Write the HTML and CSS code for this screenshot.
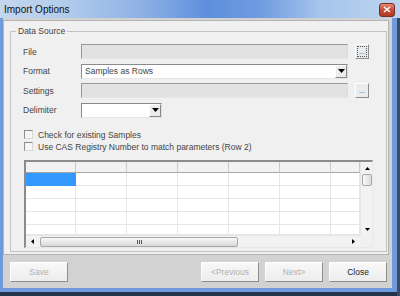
FILE: index.html
```html
<!DOCTYPE html>
<html lang="en">
<head>
    <meta charset="UTF-8">
    <title>Import Options</title>
    <link rel="stylesheet" href="styles.css">
</head>
<body>
    <div class="window">
        <div class="titlebar">
            <span class="title">Import Options</span>
            <span class="close-x">
                <svg width="8" height="7" viewBox="0 0 8 7"><path d="M1 1L7 6M7 1L1 6" stroke="#fff" stroke-width="1.6"/></svg>
            </span>
        </div>

        <div class="client">
            <div class="panel">
                <fieldset class="group">
                    <legend>Data Source</legend>

                    <div class="fields">
                        <label>File</label>
                        <div class="input"></div>
                        <button class="browse focused"><span>...</span></button>

                        <label>Format</label>
                        <div class="select">Samples as Rows<span class="drop"><svg width="7" height="4"><path d="M0 0h7L3.5 4z"/></svg></span></div>
                        <span></span>

                        <label>Settings</label>
                        <div class="input"></div>
                        <button class="browse"><span>...</span></button>

                        <label>Delimiter</label>
                        <div class="select short"><span class="drop"><svg width="7" height="4"><path d="M0 0h7L3.5 4z"/></svg></span></div>
                        <span></span>
                    </div>

                    <div class="checks">
                        <div class="check"><span class="box"></span>Check for existing Samples</div>
                        <div class="check"><span class="box"></span>Use CAS Registry Number to match parameters (Row 2)</div>
                    </div>

                    <div class="grid">
                        <div class="cells">
                            <div class="hd"></div><div class="hd"></div><div class="hd"></div><div class="hd"></div><div class="hd"></div><div class="hd"></div><div class="hd"></div>
                            <div class="cell selected"></div><div class="cell"></div><div class="cell"></div><div class="cell"></div><div class="cell"></div><div class="cell"></div><div class="cell"></div>
                            <div class="cell"></div><div class="cell"></div><div class="cell"></div><div class="cell"></div><div class="cell"></div><div class="cell"></div><div class="cell"></div>
                            <div class="cell"></div><div class="cell"></div><div class="cell"></div><div class="cell"></div><div class="cell"></div><div class="cell"></div><div class="cell"></div>
                            <div class="cell"></div><div class="cell"></div><div class="cell"></div><div class="cell"></div><div class="cell"></div><div class="cell"></div><div class="cell"></div>
                            <div class="cell"></div><div class="cell"></div><div class="cell"></div><div class="cell"></div><div class="cell"></div><div class="cell"></div><div class="cell"></div>
                        </div>
                        <div class="vscroll">
                            <span class="sb-btn"><svg width="5" height="3"><path d="M0 3h5L2.5 0z"/></svg></span>
                            <span class="vthumb"></span>
                            <span class="sb-fill"></span>
                            <span class="sb-btn"><svg width="5" height="3"><path d="M0 0h5L2.5 3z"/></svg></span>
                        </div>
                        <div class="hscroll">
                            <span class="sb-btn"><svg width="3" height="5"><path d="M3 0v5L0 2.5z"/></svg></span>
                            <span class="hthumb"><i></i><i></i><i></i></span>
                            <span class="sb-fill"></span>
                            <span class="sb-btn"><svg width="3" height="5"><path d="M0 0v5L3 2.5z"/></svg></span>
                        </div>
                        <div class="corner"></div>
                    </div>
                </fieldset>
            </div>

            <div class="buttons">
                <button class="btn disabled">Save</button>
                <span class="spacer"></span>
                <button class="btn disabled">&lt;Previous</button>
                <button class="btn disabled">Next&gt;</button>
                <button class="btn">Close</button>
            </div>
        </div>
    </div>
</body>
</html>
```

FILE: styles.css
```css
body {
    margin: 0;
    font-family: "Liberation Sans", Arial, sans-serif;
    font-size: 8.5px;
    color: #444;
}
.window {
    width: 400px;
    height: 296px;
    display: flex;
    flex-direction: column;
    background: #6f9bdc;
    box-shadow: inset -3px 0 #3c4c60, inset 0 -4px #23344a;
    overflow: hidden;
}
.titlebar {
    height: 18px;
    flex: none;
    display: flex;
    align-items: center;
    justify-content: space-between;
    padding: 0 5px 0 4px;
    background: linear-gradient(90deg, #c3d7ee 0%, #b3cdeb 15%, #8fb2e6 35%, #5e8fdc 52%, #6f9be0 65%, #a6c4ec 80%, #bcd4ef 100%);
}
.title {
    font-size: 10px;
    color: #111;
}
.close-x {
    width: 14px;
    height: 12px;
    margin-top: 1px;
    border: 1px solid #7a2c20;
    border-radius: 3px;
    background: linear-gradient(#e28b78, #c54a32 50%, #b03a24);
    display: flex;
    align-items: center;
    justify-content: center;
}
.client {
    flex: 1;
    display: flex;
    flex-direction: column;
    margin: 0 8px 8px 3px;
    padding-top: 2px;
    background: #d2d2d2;
}
.panel {
    flex: 1;
    display: flex;
    flex-direction: column;
    margin-right: 3px;
    background: #f0f0f0;
    border: 1px solid #b4b4b4;
}
.group {
    flex: 1;
    min-width: 0;
    margin: 5px 1px 2px 6px;
    padding: 0 0 3px;
    border: 1px solid #c2c2c2;
}
.group legend {
    margin-left: 5px;
    padding: 0 2px;
    line-height: 10px;
}
.fields {
    display: grid;
    grid-template-columns: 51px 267px 14px;
    grid-auto-rows: 15px;
    column-gap: 7px;
    row-gap: 4.5px;
    align-items: center;
    margin: 8px 0 0 12px;
}
.input {
    height: 15px;
    box-sizing: border-box;
    background: #e2e2e2;
    border: 1px solid;
    border-color: #999 #dcdcdc #e6e6e6 #999;
}
.select {
    height: 15px;
    box-sizing: border-box;
    display: flex;
    align-items: center;
    padding-left: 3px;
    background: #fff;
    border: 1px solid;
    border-color: #8a8a8a #dcdcdc #e6e6e6 #8a8a8a;
}
.select.short {
    width: 81px;
}
.drop {
    width: 12px;
    height: 13px;
    margin-left: auto;
    box-sizing: border-box;
    display: flex;
    align-items: center;
    justify-content: center;
    background: #ececec;
    border: 1px solid;
    border-color: #fff #8a8a8a #8a8a8a #fff;
}
.browse {
    width: 14px;
    height: 15px;
    padding: 1px;
    box-sizing: border-box;
    font: inherit;
    font-size: 7px;
    line-height: 8px;
    color: #333;
    background: #ebebeb;
    border: 1px solid;
    border-color: #fff #8c8c8c #8c8c8c #fff;
}
.browse span {
    display: flex;
    align-items: flex-end;
    justify-content: center;
    height: 100%;
    box-sizing: border-box;
    border: 1px dotted transparent;
}
.browse.focused span {
    border-color: #555;
}
.checks {
    margin: 11px 0 0 13px;
}
.check {
    height: 12px;
    display: flex;
    align-items: center;
    gap: 5px;
}
.box {
    width: 9px;
    height: 9px;
    box-sizing: border-box;
    background: #f6f6f6;
    border: 1px solid;
    border-color: #8c8c8c #d8d8d8 #d8d8d8 #8c8c8c;
}
.grid {
    width: 349px;
    box-sizing: border-box;
    margin: 7.5px 0 0 13px;
    display: grid;
    grid-template-columns: 334px 12px;
    grid-template-rows: 73px 12px;
    background: #fff;
    border-top: 2px solid #8c8c8c;
    border-left: 2px solid #8c8c8c;
    border-right: 1px solid #e8e8e8;
    border-bottom: 1px solid #e8e8e8;
}
.cells {
    display: grid;
    grid-template-columns: 50px repeat(5, 51px) 1fr;
    grid-template-rows: 11px repeat(4, 13px) 1fr;
    overflow: hidden;
}
.hd {
    background: #f2f2f2;
    border-right: 1px solid #cacaca;
    border-bottom: 1px solid #a8a8a8;
}
.cell {
    border-right: 1px solid #e6e6e6;
    border-bottom: 1px solid #e6e6e6;
}
.cell.selected {
    background: #3399ff;
    border-color: #3399ff;
}
.vscroll {
    display: flex;
    flex-direction: column;
    background: #f2f2f2;
    border-left: 1px solid #e6e6e6;
}
.hscroll {
    display: flex;
    background: #f2f2f2;
    border-top: 1px solid #e6e6e6;
}
.corner {
    background: #f0f0f0;
}
.sb-btn {
    flex: none;
    width: 12px;
    height: 12px;
    display: flex;
    align-items: center;
    justify-content: center;
}
.hscroll .sb-btn {
    width: 13px;
    height: 11px;
}
.sb-fill {
    flex: 1;
}
.vthumb {
    height: 12px;
    margin: 0 0 0 1px;
    width: 10px;
    box-sizing: border-box;
    background: linear-gradient(90deg, #f8f8f8, #dcdcdc);
    border: 1px solid #a8a8a8;
    border-radius: 2px;
}
.hthumb {
    width: 198px;
    margin: 1px 0 0 1px;
    height: 10px;
    box-sizing: border-box;
    display: flex;
    align-items: center;
    justify-content: center;
    gap: 1px;
    background: linear-gradient(#f8f8f8, #d8d8d8);
    border: 1px solid #a8a8a8;
    border-radius: 2px;
}
.hthumb i {
    width: 1px;
    height: 4px;
    background: #555;
}
.buttons {
    height: 33px;
    flex: none;
    box-sizing: border-box;
    display: flex;
    gap: 6px;
    padding: 7px 5px 0 7px;
}
.spacer {
    flex: 1;
}
.btn {
    width: 58px;
    height: 20px;
    padding: 0;
    font: inherit;
    font-size: 8.5px;
    color: #222;
    background: linear-gradient(#f8f8f8, #ededed);
    border: 1px solid;
    border-color: #fff #8e8e8e #8e8e8e #fff;
}
.btn.disabled {
    color: #b0b0b0;
}
```
